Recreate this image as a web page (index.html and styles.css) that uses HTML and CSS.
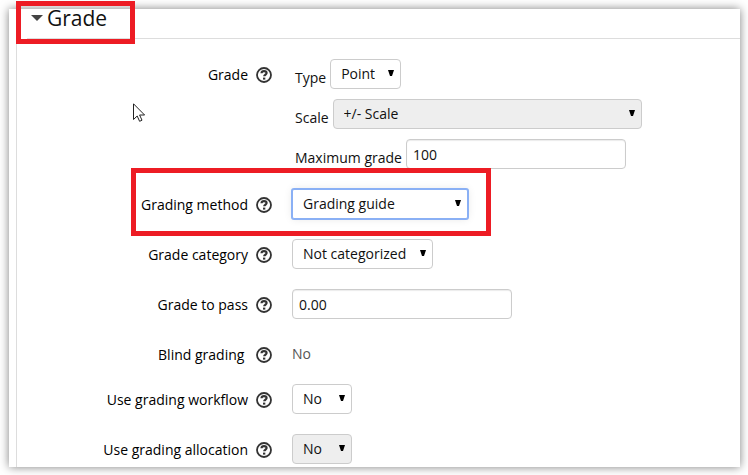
FILE: index.html
```
<!DOCTYPE html>
<html lang="en">
<head>
    <meta charset="UTF-8">
    <meta name="viewport" content="width=device-width, initial-scale=1.0">
    <title>Grade settings</title>
    <link rel="stylesheet" href="styles.css">
</head>
<body>
    <!-- Shared help icon -->
    <svg class="defs" aria-hidden="true">
        <symbol id="icon-help" viewBox="0 0 16 16">
            <circle cx="8" cy="8" r="7" fill="none" stroke="currentColor" stroke-width="1.8"/>
            <path d="M5.500 6.200C5.600 4.700 6.600 4.100 8 4.100c1.600 0 2.600.8 2.600 2 0 1.700-2.400 1.500-2.400 3.200" fill="none" stroke="currentColor" stroke-width="2.200"/>
            <rect x="7" y="10.600" width="2.300" height="2" fill="currentColor"/>
        </symbol>
    </svg>

    <main class="panel">
        <form class="settings">
            <header class="section-title">
                <h2><span class="caret"></span>Grade</h2>
                <span class="highlight highlight-title"></span>
            </header>

            <!-- Grade type, scale and maximum -->
            <div class="row">
                <div class="row-label">
                    <span>Grade</span>
                    <button type="button" class="help" aria-label="Help with Grade"><svg><use href="#icon-help"/></svg></button>
                </div>
                <div class="group">
                    <div class="group-item">
                        <label for="type">Type</label>
                        <select id="type"><option>Point</option></select>
                    </div>
                    <div class="group-item">
                        <label for="scale">Scale</label>
                        <select id="scale" class="wide" disabled><option>+/- Scale</option></select>
                    </div>
                    <div class="group-item">
                        <label for="max">Maximum grade</label>
                        <input type="text" id="max" value="100">
                    </div>
                </div>
            </div>

            <div class="row">
                <div class="row-label">
                    <label for="method">Grading method</label>
                    <button type="button" class="help" aria-label="Help with Grading method"><svg><use href="#icon-help"/></svg></button>
                </div>
                <div class="row-field">
                    <select id="method" class="focused">
                        <option>Simple direct grading</option>
                        <option selected>Grading guide</option>
                        <option>Rubric</option>
                    </select>
                </div>
                <span class="highlight highlight-row"></span>
            </div>

            <div class="row">
                <div class="row-label">
                    <label for="category">Grade category</label>
                    <button type="button" class="help" aria-label="Help with Grade category"><svg><use href="#icon-help"/></svg></button>
                </div>
                <div class="row-field">
                    <select id="category"><option>Not categorized</option></select>
                </div>
            </div>

            <div class="row">
                <div class="row-label">
                    <label for="pass">Grade to pass</label>
                    <button type="button" class="help" aria-label="Help with Grade to pass"><svg><use href="#icon-help"/></svg></button>
                </div>
                <div class="row-field">
                    <input type="text" id="pass" value="0.00">
                </div>
            </div>

            <div class="row row-static">
                <div class="row-label">
                    <span>Blind grading&nbsp;</span>
                    <button type="button" class="help" aria-label="Help with Blind grading"><svg><use href="#icon-help"/></svg></button>
                </div>
                <div class="row-field">No</div>
            </div>

            <div class="row">
                <div class="row-label">
                    <label for="workflow">Use grading workflow</label>
                    <button type="button" class="help" aria-label="Help with Use grading workflow"><svg><use href="#icon-help"/></svg></button>
                </div>
                <div class="row-field">
                    <select id="workflow"><option>No</option><option>Yes</option></select>
                </div>
            </div>

            <div class="row">
                <div class="row-label">
                    <label for="allocation">Use grading allocation</label>
                    <button type="button" class="help" aria-label="Help with Use grading allocation"><svg><use href="#icon-help"/></svg></button>
                </div>
                <div class="row-field">
                    <select id="allocation" disabled><option>No</option><option>Yes</option></select>
                </div>
            </div>
        </form>

        <svg class="pointer" viewBox="0 0 12 19" aria-hidden="true">
            <path d="M.5.800v15.700l3.700-3.500 2.400 5.300 2.400-1.100-2.400-5.200h5z" fill="#fff" stroke="#222" stroke-width="1"/>
        </svg>
    </main>
</body>
</html>
```
FILE: styles.css
```
:root {
    --text: #111;
    --muted: #555;
    --border: #ccc;
    --disabled: #eee;
    --focus: #8ab0f5;
    --highlight: #ed1c24;
}

* {
    box-sizing: border-box;
    margin: 0;
    padding: 0;
}

body {
    padding: 9px 8px 8px 9px;
    background: white;
    color: var(--text);
    font-family: "Open Sans", sans-serif;
    font-size: 14px;
    line-height: 20px;
}

.defs {
    position: absolute;
    width: 0;
    height: 0;
}

.panel {
    position: relative;
    padding-left: 7px;
    background: white;
    box-shadow: 0 0 9px rgba(0, 0, 0, 0.5);
}

.settings {
    display: flex;
    flex-direction: column;
    gap: 20px;
    padding-bottom: 3px;
    border-left: 1px solid #ddd;
}

/* Section title */
.section-title {
    position: relative;
    margin-left: 10px;
    padding: 0 0 11px 4px;
    border-bottom: 1px solid #ddd;
}

h2 {
    display: flex;
    align-items: center;
    gap: 4px;
    font-size: 21px;
    font-weight: 400;
    line-height: 18px;
}

.caret {
    border: 6px solid transparent;
    border-top-color: #444;
    border-bottom: 0;
}

/* Form rows */
.row {
    position: relative;
    display: grid;
    grid-template-columns: 255px 1fr;
    gap: 20px;
}

.row-label {
    display: flex;
    justify-content: flex-end;
    align-items: center;
    gap: 8px;
    height: 32px;
    color: #000;
    font-weight: 500;
}

.row-static {
    height: 25px;
}

.row-static .row-field {
    padding-top: 5px;
    color: var(--muted);
}

.row:not(.row-static) {
    margin-bottom: -2px;
}

.group {
    display: flex;
    flex-direction: column;
    gap: 10px;
    padding: 0 0 2px 3px;
}

.group-item {
    display: flex;
    align-items: center;
    gap: 4px;
    height: 30px;
}

.group-item label {
    padding-top: 8px;
}

.help {
    width: 16px;
    height: 16px;
    border: 0;
    background: none;
    color: #333;
    cursor: pointer;
}

.help svg {
    display: block;
    width: 16px;
    height: 16px;
}

/* Controls */
select,
input {
    display: block;
    height: 30px;
    border: 1px solid var(--border);
    border-radius: 4px;
    background-color: white;
    color: var(--text);
    font: inherit;
}

select {
    appearance: none;
    padding: 0 25px 0 10px;
    background-image: url("data:image/svg+xml,%3Csvg xmlns='http://www.w3.org/2000/svg' width='6' height='8'%3E%3Cpath d='M0 0h6L4 6H2z'/%3E%3C/svg%3E");
    background-repeat: no-repeat;
    background-position: right 6px center;
}

select:disabled {
    background-color: var(--disabled);
    opacity: 1;
}

input {
    width: 220px;
    padding: 0 6px;
    box-shadow: inset 0 1px 1px rgba(0, 0, 0, 0.08);
}

.wide {
    width: 309px;
}

.focused {
    border-color: var(--focus);
    border-radius: 2px;
    box-shadow: 0 0 0 1px var(--focus), 0 0 8px rgba(0, 0, 0, 0.1);
}

/* Red boxes drawn over the form */
.highlight {
    position: absolute;
    border: 5px solid var(--highlight);
    pointer-events: none;
}

.highlight-title {
    top: -8px;
    left: -11px;
    width: 119px;
    height: 43px;
}

.highlight-row {
    top: -21px;
    left: 114px;
    width: 360px;
    height: 68px;
}

.pointer {
    position: absolute;
    top: 94px;
    left: 124px;
    width: 12px;
    height: 19px;
}
```
